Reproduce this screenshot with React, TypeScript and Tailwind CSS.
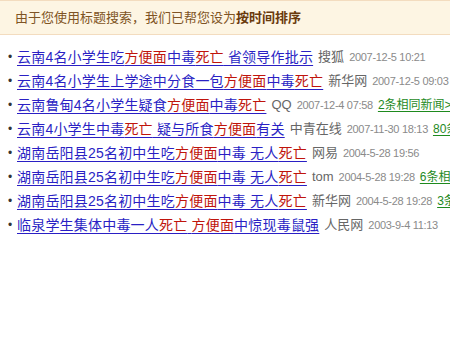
import React from 'react';

type Item = {
  title: React.ReactNode;
  source: string;
  date: string;
  same?: string;
};

const R = ({ children }: { children: React.ReactNode }) => (
  <span className="text-[#c0140c] decoration-[#c0140c]">{children}</span>
);

const items: Item[] = [
  { title: <>云南4名小学生吃<R>方便面</R>中毒<R>死亡</R> 省领导作批示</>, source: '搜狐', date: '2007-12-5 10:21' },
  { title: <>云南4名小学生上学途中分食一包<R>方便面</R>中毒<R>死亡</R></>, source: '新华网', date: '2007-12-5 09:03', same: '1条相同新闻>>' },
  { title: <>云南鲁甸4名小学生疑食<R>方便面</R>中毒<R>死亡</R></>, source: 'QQ', date: '2007-12-4 07:58', same: '2条相同新闻>>' },
  { title: <>云南4小学生中毒<R>死亡</R> 疑与所食<R>方便面</R>有关</>, source: '中青在线', date: '2007-11-30 18:13', same: '80条相同新闻>>' },
  { title: <>湖南岳阳县25名初中生吃<R>方便面</R>中毒 无人<R>死亡</R></>, source: '网易', date: '2004-5-28 19:56' },
  { title: <>湖南岳阳县25名初中生吃<R>方便面</R>中毒 无人<R>死亡</R></>, source: 'tom', date: '2004-5-28 19:28', same: '6条相同新闻>>' },
  { title: <>湖南岳阳县25名初中生吃<R>方便面</R>中毒 无人<R>死亡</R></>, source: '新华网', date: '2004-5-28 19:28', same: '3条相同新闻>>' },
  { title: <>临泉学生集体中毒一人<R>死亡</R> <R>方便面</R>中惊现毒鼠强</>, source: '人民网', date: '2003-9-4 11:13' },
];

export default function App() {
  return (
    <div className="w-[450px] h-[338px] overflow-hidden bg-white font-['Liberation_Sans','Noto_Sans_CJK_SC',sans-serif]">
      {/* notice bar */}
      <div className="h-[35px] border-y border-[#f3dcbf] bg-[#fdf5e3] pl-[15px] flex items-center text-[13px] text-[#7f5424]">
        由于您使用标题搜索，我们已帮您设为<b className="text-[#6a3a0c]">按时间排序</b>
      </div>

      <ul className="mt-[10px] pl-[8px]">
        {items.map((it, i) => (
          <li key={i} className="h-[24px] flex items-center whitespace-nowrap">
            <span className="shrink-0 w-[9px] text-[12px] text-[#333] leading-none">•</span>
            <a className="shrink-0 text-[14px] text-[#2a1fc4] underline underline-offset-[3px] decoration-[#2a1fc4] tracking-[0.2px]">
              {it.title}
            </a>
            <span className="shrink-0 ml-[5px] text-[13px] text-[#666]">{it.source}</span>
            <span className="shrink-0 ml-[5px] text-[11px] text-[#8a8a8a] tracking-[-0.3px]">{it.date}</span>
            {it.same && (
              <a className="shrink-0 ml-[5px] text-[12px] text-[#1e8a1e] underline underline-offset-2">{it.same}</a>
            )}
          </li>
        ))}
      </ul>
    </div>
  );
}
